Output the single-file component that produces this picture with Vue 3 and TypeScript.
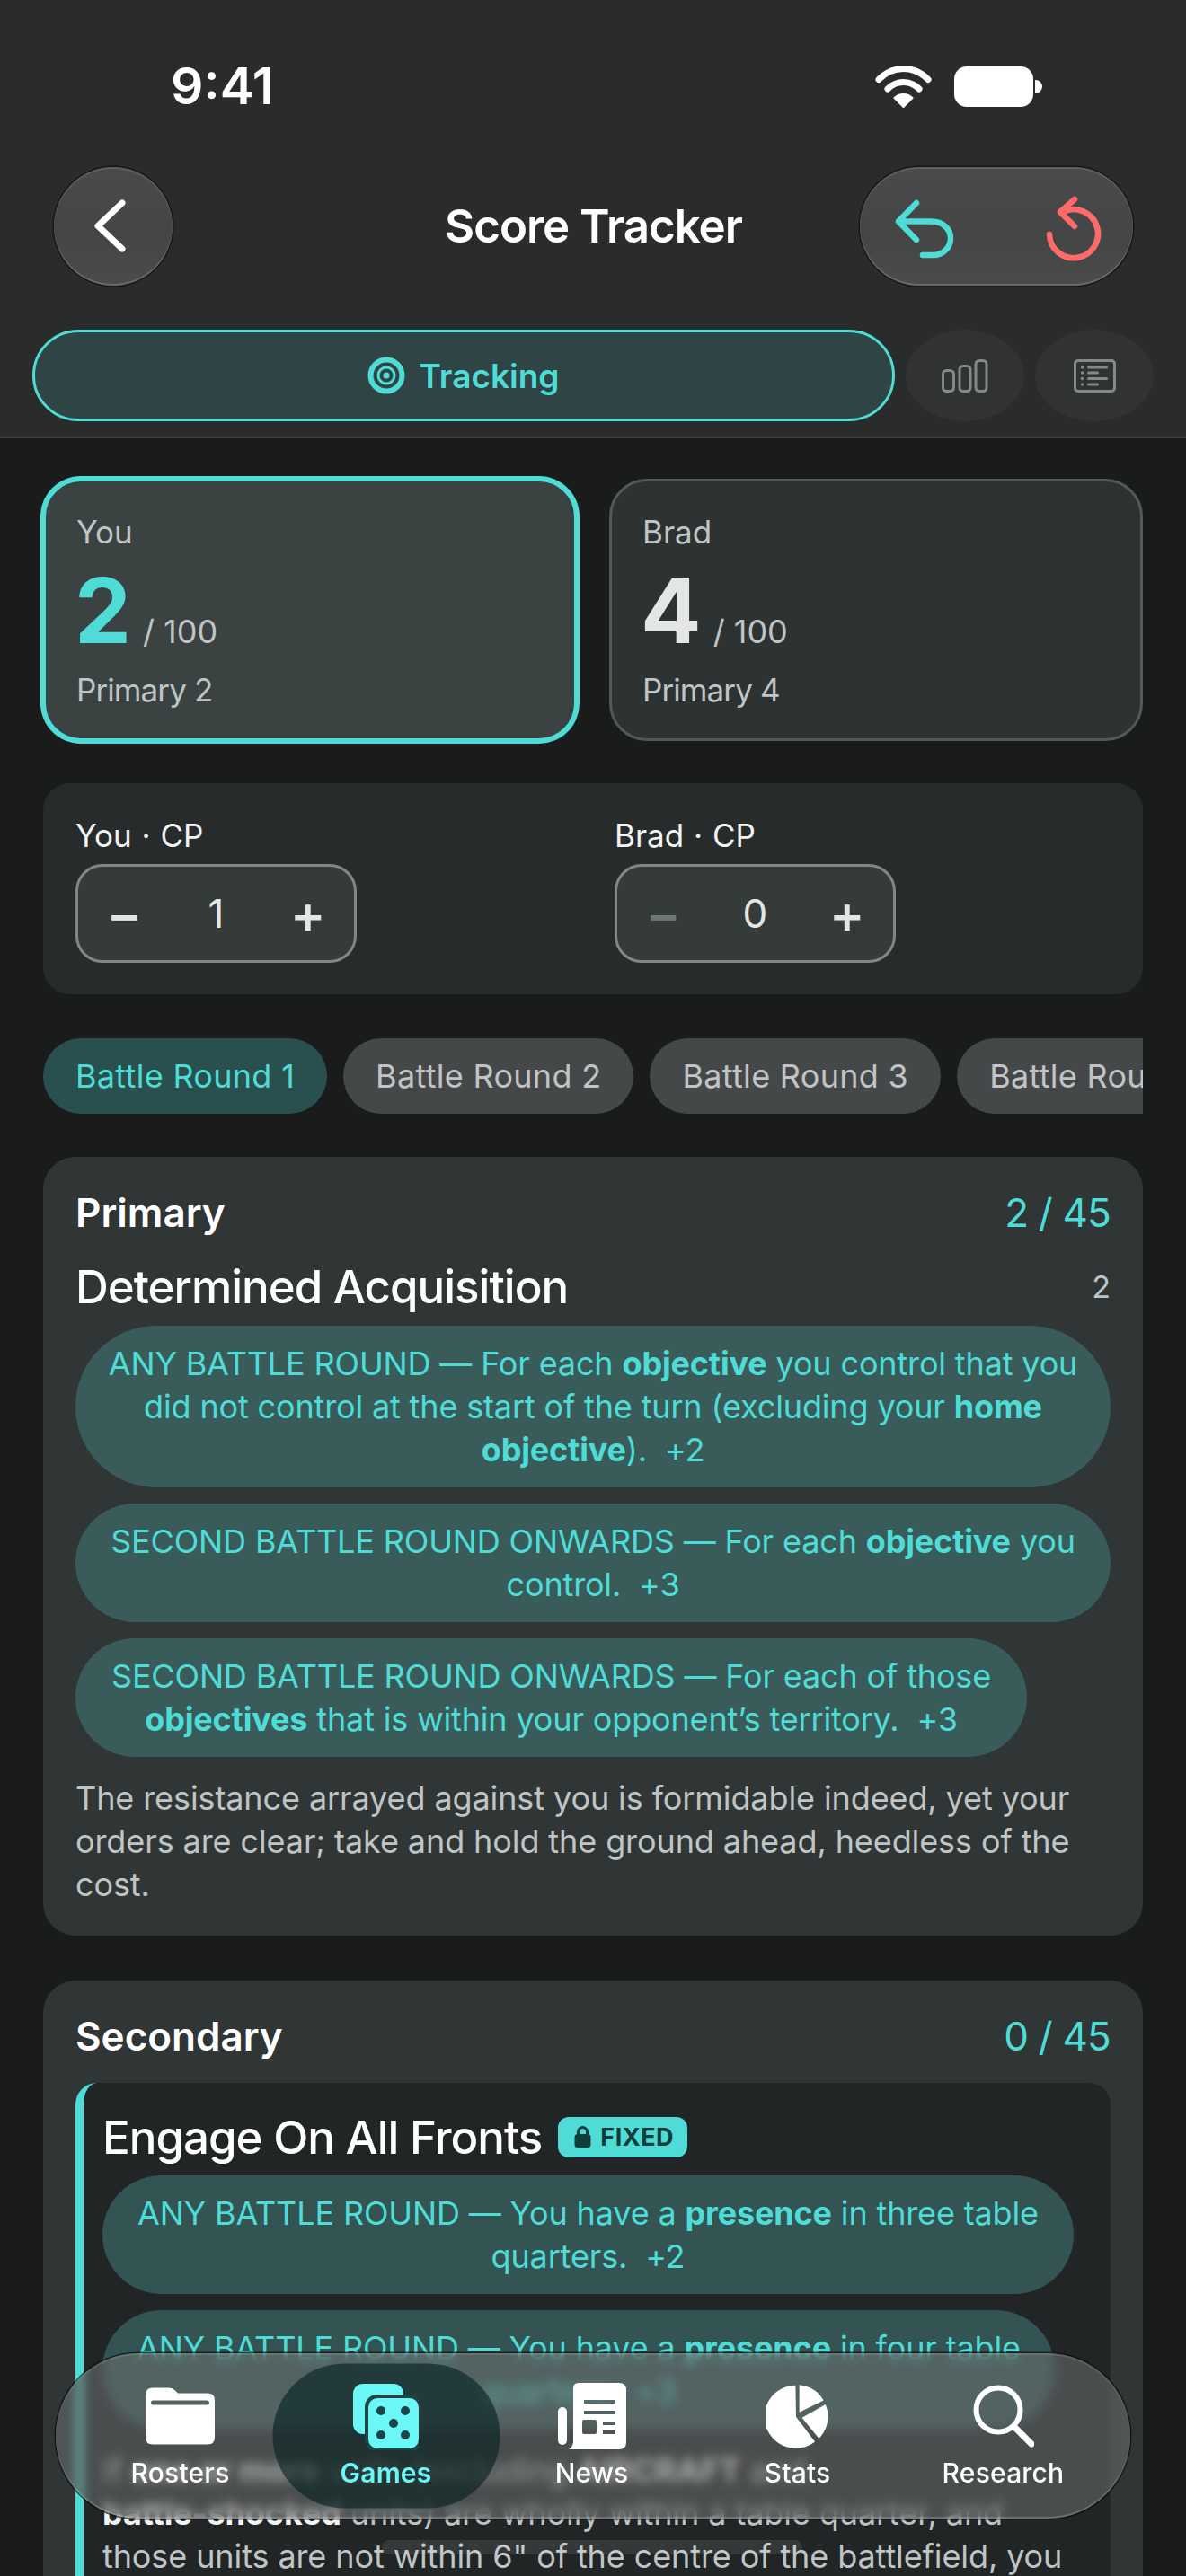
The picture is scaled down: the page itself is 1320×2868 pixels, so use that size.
<script setup lang="ts">
const rounds: string[] = ['Battle Round 1', 'Battle Round 2', 'Battle Round 3', 'Battle Round 4']
</script>

<template>
  <div class="screen">
    <header class="top">
      <div class="status">
        <span class="time">9:41</span>
        <div class="status-icons">
          <svg class="wifi" width="63" height="46" viewBox="0 0 63 46">
            <path d="M4 14.5C20 -1.5 43 -1.5 59 14.5" fill="none" stroke="#fff" stroke-width="7" stroke-linecap="round"/>
            <path d="M14 25C24 15 39 15 49 25" fill="none" stroke="#fff" stroke-width="7" stroke-linecap="round"/>
            <path d="M31.5 45L21.5 35C27 29.5 36 29.5 41.5 35Z" fill="#fff" stroke="#fff" stroke-width="2" stroke-linejoin="round"/>
          </svg>
          <div class="battery"></div>
          <div class="nub"></div>
        </div>
      </div>
      <div class="bar">
        <button class="glass round">
          <svg width="44" height="66" viewBox="0 0 44 66">
            <path d="M36 7L9 32.5L36 58" fill="none" stroke="#fff" stroke-width="7" stroke-linecap="round" stroke-linejoin="round"/>
          </svg>
        </button>
        <h1 class="title">Score Tracker</h1>
        <div class="glass pair">
          <svg class="undo" width="68" height="68" viewBox="0 0 68 68">
            <path d="M25 4L5 24.5L25 45M5 24.5H42C54 24.5 63 33 63 43C63 54 54 62 44 62H32" fill="none" stroke="#4fdcd6" stroke-width="6.5" stroke-linecap="round" stroke-linejoin="round"/>
          </svg>
          <svg class="redo" width="64" height="74" viewBox="0 0 64 74">
            <path d="M4 43A27 27 0 1 0 19 18" fill="none" stroke="#ff6b6b" stroke-width="6.5" stroke-linecap="round"/>
            <path d="M32 4L16 18L32 34" fill="none" stroke="#ff6b6b" stroke-width="6.5" stroke-linecap="round" stroke-linejoin="round"/>
          </svg>
        </div>
      </div>
      <div class="tabs">
        <div class="tab-main">
          <svg width="42" height="42" viewBox="0 0 42 42">
            <circle cx="21" cy="21" r="17.5" fill="none" stroke="#4fdcd6" stroke-width="6"/>
            <circle cx="21" cy="21" r="9" fill="none" stroke="#4fdcd6" stroke-width="3"/>
            <circle cx="21" cy="21" r="3.5" fill="#4fdcd6"/>
          </svg>
          <span>Tracking</span>
        </div>
        <div class="tab-icon">
          <svg width="52" height="37" viewBox="0 0 52 37">
            <g fill="none" stroke="#858989" stroke-width="3">
              <rect x="1.5" y="12.5" width="12" height="23" rx="4"/>
              <rect x="20" y="7.5" width="12" height="28" rx="4"/>
              <rect x="38" y="1.5" width="12" height="34" rx="4"/>
            </g>
          </svg>
        </div>
        <div class="tab-icon">
          <svg width="47" height="37" viewBox="0 0 47 37">
            <rect x="1.5" y="1.5" width="44" height="34" rx="3.5" fill="none" stroke="#858989" stroke-width="3"/>
            <g fill="#858989">
              <circle cx="9.5" cy="9" r="1.7"/><circle cx="9.5" cy="15" r="1.7"/><circle cx="9.5" cy="21.5" r="1.7"/><circle cx="9.5" cy="28" r="1.7"/>
              <rect x="15" y="7.5" width="23" height="3" rx="1.5"/>
              <rect x="15" y="13.5" width="13" height="3" rx="1.5"/>
              <rect x="15" y="20" width="23" height="3" rx="1.5"/>
              <rect x="15" y="26.5" width="13" height="3" rx="1.5"/>
            </g>
          </svg>
        </div>
      </div>
    </header>

    <main class="content">
      <section class="scores">
        <div class="score active">
          <div class="score-name">You</div>
          <div class="score-line"><span class="score-num">2</span><span class="score-max">/ 100</span></div>
          <div class="score-sub">Primary 2</div>
        </div>
        <div class="score">
          <div class="score-name">Brad</div>
          <div class="score-line"><span class="score-num">4</span><span class="score-max">/ 100</span></div>
          <div class="score-sub">Primary 4</div>
        </div>
      </section>

      <section class="cp">
        <div>
          <div class="cp-label">You · CP</div>
          <div class="stepper"><span class="step">−</span><span class="val">1</span><span class="step">+</span></div>
        </div>
        <div>
          <div class="cp-label">Brad · CP</div>
          <div class="stepper"><span class="step off">−</span><span class="val">0</span><span class="step">+</span></div>
        </div>
      </section>

      <div class="rounds">
        <span v-for="(r, i) in rounds" :key="r" class="round-pill" :class="{ on: i === 0 }">{{ r }}</span>
      </div>

      <section class="panel">
        <div class="panel-head"><span class="panel-name">Primary</span><span class="panel-score">2 / 45</span></div>
        <div class="mission-row"><span class="mission">Determined Acquisition</span><span class="mission-pts">2</span></div>
        <div class="rules">
          <div class="rule w-full">ANY BATTLE ROUND — For each <b>objective</b> you control that you did not control at the start of the turn (excluding your <b>home objective</b>).&nbsp; +2</div>
          <div class="rule w-full">SECOND BATTLE ROUND ONWARDS — For each <b>objective</b> you control.&nbsp; +3</div>
          <div class="rule w-1059">SECOND BATTLE ROUND ONWARDS — For each of those <b>objectives</b> that is within your opponent’s territory.&nbsp; +3</div>
        </div>
        <p class="desc">The resistance arrayed against you is formidable indeed, yet your orders are clear; take and hold the ground ahead, heedless of the cost.</p>
      </section>

      <section class="panel second">
        <div class="panel-head"><span class="panel-name">Secondary</span><span class="panel-score">0 / 45</span></div>
        <div class="inner">
          <div class="mission-row left">
            <span class="mission">Engage On All Fronts</span>
            <span class="badge">
              <svg width="19" height="24" viewBox="0 0 19 24">
                <path d="M4.500 10V6.500a5 5 0 0 1 10 0V10" fill="none" stroke="#0e3d3c" stroke-width="3"/>
                <rect x="0.500" y="9" width="18" height="15" rx="3.500" fill="#0e3d3c"/>
              </svg>
              <span>FIXED</span>
            </span>
          </div>
          <div class="rules">
            <div class="rule w-1081">ANY BATTLE ROUND — You have a <b>presence</b> in three table quarters.&nbsp; +2</div>
            <div class="rule w-1060">ANY BATTLE ROUND — You have a <b>presence</b> in four table quarters.&nbsp; +3</div>
          </div>
          <p class="desc">If <b>one or more</b> units (excluding <b>AIRCRAFT</b> and<br><b>battle-shocked</b> units) are wholly within a table quarter, and<br>those units are not within 6" of the centre of the battlefield, you</p>
        </div>
      </section>
    </main>

    <div class="home"></div>

    <nav class="dock">
      <div class="dock-item">
        <svg width="77" height="63" viewBox="0 0 77 63">
          <path fill="#fff" fill-rule="evenodd" d="M8 0H26q4 0 7 3l3 3H69q8 0 8 8V55q0 8-8 8H8q-8 0-8-8V8q0-8 8-8ZM8 14q-2 0-2 2.500t2 2.500H69q2 0 2-2.500t-2-2.500Z"/>
        </svg>
        <span>Rosters</span>
      </div>
      <div class="dock-item on">
        <svg width="73" height="72" viewBox="0 0 73 72">
          <rect x="0" y="0" width="56" height="56" rx="11" fill="#6cf7f7"/>
          <rect x="15" y="14" width="60" height="60" rx="12" fill="#6cf7f7" stroke="#1d4545" stroke-width="4"/>
          <g fill="#1d4545">
            <circle cx="31" cy="30" r="5"/><circle cx="58" cy="30" r="5"/><circle cx="45" cy="44" r="5"/><circle cx="31" cy="57" r="5"/><circle cx="58" cy="57" r="5"/>
          </g>
        </svg>
        <span>Games</span>
      </div>
      <div class="dock-item">
        <svg width="76" height="74" viewBox="0 0 76 74">
          <rect x="0" y="27" width="10" height="42" rx="5" fill="#fff"/>
          <path fill="#fff" fill-rule="evenodd" d="M23 0H68q8 0 8 8V66q0 8-8 8H12q4-2 5-8V6q0-6 6-6ZM29 19v4H64v-4ZM29 31v4H64v-4ZM29 41q-2 0-2 2v12q0 2 2 2H41q2 0 2-2V43q0-2-2-2ZM50 43v4H64v-4ZM50 53v4H64v-4Z"/>
        </svg>
        <span>News</span>
      </div>
      <div class="dock-item">
        <svg width="70" height="70" viewBox="0 0 70 70">
          <g fill="#fff">
            <path d="M32.400 0.700A35 35 0 1 0 54 63.500L33 35.700Z"/>
            <path d="M36.600 0.300A35 35 0 0 1 63.600 17.500L36.600 30.700Z"/>
            <path d="M65.800 22A35 35 0 0 1 58.500 60L39.600 36.700Z"/>
          </g>
        </svg>
        <span>Stats</span>
      </div>
      <div class="dock-item">
        <svg width="68" height="70" viewBox="0 0 68 70">
          <circle cx="28" cy="28" r="24.500" fill="none" stroke="#fff" stroke-width="6"/>
          <path d="M48 49L65 66" fill="none" stroke="#fff" stroke-width="7" stroke-linecap="round"/>
        </svg>
        <span>Research</span>
      </div>
    </nav>
  </div>
</template>

<style>
html, body { margin: 0; background: #1a1c1c; }
</style>

<style scoped>
* { box-sizing: border-box; }
.screen {
  position: relative;
  width: 1320px;
  height: 2868px;
  overflow: hidden;
  background: #1a1c1c;
  color: #fff;
  font-family: Inter, "Liberation Sans", sans-serif;
}
.top {
  height: 488px;
  background: #2a2c2c;
  border-bottom: 2px solid #3b3d3d;
}
.status {
  height: 186px;
  display: flex;
  justify-content: space-between;
  padding: 61px 160px 0 190px;
}
.time { font-size: 57px; font-weight: 600; line-height: 70px; }
.status-icons { display: flex; margin-top: 13px; height: 46px; }
.wifi { margin-right: 25px; }
.battery { width: 88px; height: 45px; border-radius: 14px; background: #fff; }
.nub { width: 8px; height: 15px; margin: 15px 0 0 2px; background: #fff; border-radius: 0 8px 8px 0; }
.bar {
  height: 132px;
  padding: 0 59px 0 60px;
  display: grid;
  grid-template-columns: 1fr auto 1fr;
  align-items: center;
}
.glass {
  height: 132px;
  border: 0;
  padding: 0;
  background: linear-gradient(180deg, #484a4b 0%, #444646 60%, #4a4c4c 100%);
  box-shadow: 0 0 0 1.500px #141515, inset 0 2px 1px rgba(255,255,255,.12), inset 0 -2px 1px rgba(255,255,255,.18);
  display: flex;
  align-items: center;
}
.round { width: 132px; border-radius: 50%; justify-content: flex-start; padding-left: 40px; justify-self: start; }
.title { margin: 0; font-size: 51px; font-weight: 600; line-height: 62px; letter-spacing: -1px; }
.pair { width: 304px; border-radius: 66px; justify-self: end; position: relative; }
.undo { position: absolute; left: 38px; top: 36px; }
.redo { position: absolute; left: 207px; top: 32px; }
.tabs {
  display: flex;
  gap: 12px;
  margin-top: 49px;
  padding-left: 36px;
  height: 102px;
}
.tab-main {
  width: 960px;
  border: 3px solid #4fdcd6;
  border-radius: 51px;
  background: #2f4444;
  color: #4fdcd6;
  font-size: 37px;
  font-weight: 600;
  display: flex;
  align-items: center;
  justify-content: center;
  gap: 15px;
}
.tab-icon {
  width: 132px;
  border-radius: 50%;
  background: #313333;
  display: flex;
  align-items: center;
  justify-content: center;
}
.content { padding: 45px 48px 0; }
.scores { display: grid; grid-template-columns: 1fr 1fr; gap: 36px; }
.score {
  height: 292px;
  border: 3px solid #545858;
  border-radius: 42px;
  background: #2d3232;
  padding: 32px 34px 0;
  color: #bfc4c4;
}
.score.active {
  border-color: #4fdcd6;
  box-shadow: 0 0 0 3px #4fdcd6;
  background: #3a4242;
}
.score-name, .score-sub { font-size: 35px; line-height: 48px; }
.score-sub { letter-spacing: -0.9px; }
.score-line { display: flex; align-items: baseline; gap: 13px; height: 128px; }
.score-num { font-size: 100px; font-weight: 700; line-height: 128px; color: #e4e6e6; margin-left: -2px; }
.active .score-num { color: #4fdcd6; }
.score-max { font-size: 36px; }
.cp {
  margin-top: 47px;
  height: 235px;
  background: #282b2b;
  border-radius: 30px;
  padding: 34px 36px 0;
  display: grid;
  grid-template-columns: 1fr 1fr;
  gap: 48px;
}
.cp-label { font-size: 35px; line-height: 48px; color: #f2f3f3; word-spacing: 1px; }
.stepper {
  width: 313px;
  height: 110px;
  margin-top: 8px;
  border: 3px solid #808785;
  border-radius: 30px;
  background: #343b39;
  display: grid;
  grid-template-columns: 1fr 1fr 1fr;
  align-items: center;
  text-align: center;
  color: #e4e6e6;
}
.step { font-size: 60px; font-weight: 500; line-height: 1; }
.step.off { color: #6f7775; }
.val { font-size: 44px; }
.rounds {
  margin-top: 49px;
  display: flex;
  gap: 18px;
  overflow: hidden;
}
.round-pill {
  flex: none;
  height: 84px;
  line-height: 84px;
  padding: 0 36px;
  border-radius: 42px;
  background: #454849;
  color: #c0c4c4;
  font-size: 36px;
  letter-spacing: 0.3px;
}
.round-pill.on { background: #2a4f4f; color: #4fdcd6; }
.panel {
  margin-top: 48px;
  background: #303535;
  border-radius: 36px;
  padding: 36px 36px 33px;
}
.panel.second { margin-top: 50px; padding-bottom: 0; height: 800px; }
.panel-head {
  display: flex;
  justify-content: space-between;
  align-items: center;
  height: 52px;
}
.panel-name { font-size: 44px; font-weight: 600; }
.panel-score { font-size: 44px; color: #4fdcd6; letter-spacing: -0.8px; }
.mission-row {
  margin-top: 25px;
  height: 62px;
  display: flex;
  justify-content: space-between;
  align-items: center;
}
.mission-row.left { margin-top: 0; justify-content: flex-start; gap: 18px; }
.mission { font-size: 51px; font-weight: 500; letter-spacing: -1px; }
.mission-pts { font-size: 34px; color: #bfc4c4; }
.rules { margin-top: 13px; display: flex; flex-direction: column; gap: 18px; }
.rule {
  padding: 18px 30px;
  border-radius: 90px;
  background: #395c5b;
  color: #4fdcd6;
  font-size: 36px;
  line-height: 48px;
  text-align: center;
  letter-spacing: -0.15px;
}
.w-full { width: 100%; }
.w-1059 { width: 1059px; }
.w-1081 { width: 1081px; }
.w-1060 { width: 1060px; }
.rule b { font-weight: 700; }
.desc { margin: 22px 0 0; font-size: 36px; line-height: 48px; color: #bfc4c4; letter-spacing: -0.1px; }
.desc b { color: #f2f3f3; font-weight: 700; }
.inner {
  margin-top: 26px;
  background: #212526;
  border-left: 9px solid #4fdcd6;
  border-radius: 24px;
  padding: 29px 30px 0 21px;
  height: 700px;
}
.inner .rules { margin-top: 12px; }
.inner .rule { background: #335453; }
.badge {
  display: inline-flex;
  align-items: center;
  gap: 10px;
  height: 45px;
  padding: 0 15px 0 18px;
  border-radius: 12px;
  background: #4fdcd6;
  color: #0e3d3c;
  font-size: 27px;
  font-weight: 700;
  letter-spacing: 0.5px;
}
.home {
  position: absolute;
  left: 425px;
  top: 2828px;
  width: 468px;
  height: 16px;
  border-radius: 8px;
  background: rgba(255,255,255,.09);
}
.dock {
  position: absolute;
  left: 62px;
  top: 2620px;
  width: 1196px;
  height: 184px;
  border-radius: 92px;
  padding: 0 24px;
  display: grid;
  grid-template-columns: repeat(5, 229px);
  align-items: center;
  background: rgba(110,112,112,.55);
  -webkit-backdrop-filter: blur(6px);
  backdrop-filter: blur(6px);
  box-shadow: 0 0 0 1.500px rgba(10,12,12,.7), inset 0 2px 1px rgba(255,255,255,.12), inset 0 -2px 1px rgba(255,255,255,.2);
}
.dock-item {
  position: relative;
  height: 120px;
  display: flex;
  flex-direction: column;
  align-items: center;
  justify-content: flex-start;
  color: #fff;
  font-size: 30px;
  font-weight: 500;
  letter-spacing: 0.2px;
}
.dock-item svg { position: relative; height: 76px; flex: none; }
.dock-item span { position: relative; margin-top: 7px; line-height: 36px; }
.dock-item.on { color: #6cf7f7; font-weight: 600; }
.dock-item.on::before {
  content: "";
  position: absolute;
  left: 50%;
  top: 50%;
  width: 253px;
  height: 161px;
  transform: translate(-50%, -50%);
  border-radius: 80px;
  background: rgba(0,30,30,.58);
}
</style>
